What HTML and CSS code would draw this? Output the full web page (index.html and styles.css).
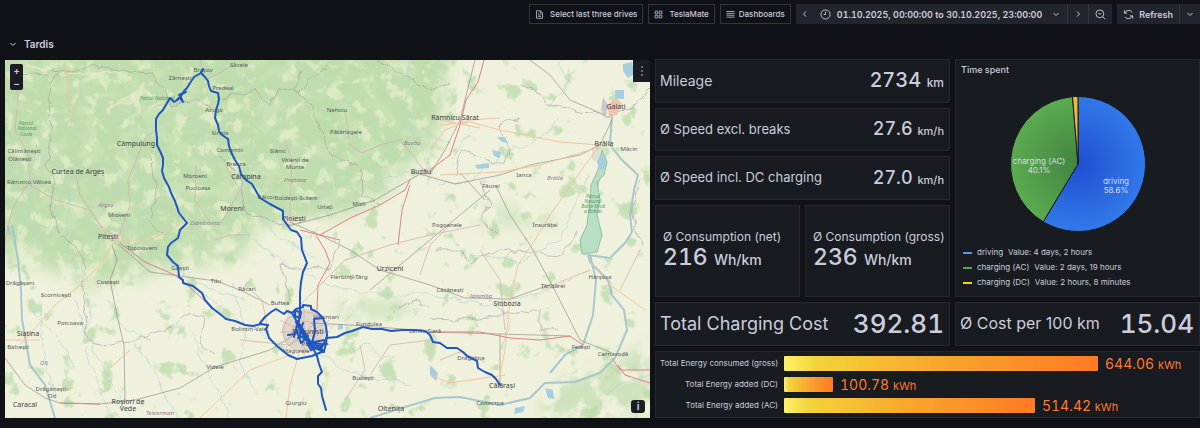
FILE: index.html
```html
<!DOCTYPE html>
<html lang="en">
<head>
<meta charset="utf-8">
<title>Tardis</title>
<link rel="stylesheet" href="styles.css">
</head>
<body>
<header class="toolbar">
  <button class="btn outline" type="button">
    <svg class="ico" viewBox="0 0 24 24"><path d="M14 2H4v20h16V8zM14 2v6h6M8 13h8M8 17h8M8 9h2"/></svg>
    <span class="wide">Select last three drives</span>
  </button>
  <button class="btn outline" type="button">
    <svg class="ico" viewBox="0 0 24 24"><path d="M3 3h7v7H3zM14 3h7v7h-7zM3 14h7v7H3zM14 14h7v7h-7z"/></svg>
    <span class="wide">TeslaMate</span>
  </button>
  <button class="btn outline" type="button">
    <svg class="ico" viewBox="0 0 24 24"><path d="M1 4h22M1 9h22M1 14h22M1 19h22"/></svg>
    <span>Dashboards</span>
  </button>
  <div class="group">
    <button class="btn seg" type="button" aria-label="Move time range backwards"><svg class="chev" viewBox="0 0 8 8"><path d="M5 1.500 2.500 4 5 6.500"/></svg></button>
    <button class="btn seg range" type="button">
      <svg class="ico big" viewBox="0 0 24 24"><circle cx="12" cy="12" r="10"/><path d="M12 6v6H8"/></svg>
      <span>01.10.2025, 00:00:00 to 30.10.2025, 23:00:00</span>
      <svg class="chev" viewBox="0 0 8 8"><path d="M1.500 3 4 5.500 6.500 3"/></svg>
    </button>
    <button class="btn seg split" type="button" aria-label="Move time range forwards"><svg class="chev" viewBox="0 0 8 8"><path d="M3 1.500 5.500 4 3 6.500"/></svg></button>
    <button class="btn seg split" type="button" aria-label="Zoom out time range"><svg class="ico big" viewBox="0 0 24 24"><circle cx="10.500" cy="10.500" r="8.500"/><path d="M17 17l5.500 5.500M7 10.500h7"/></svg></button>
  </div>
  <div class="group">
    <button class="btn seg refresh" type="button">
      <svg class="ico big" viewBox="0 0 24 24"><path d="M3 3v6h6M4 9a9 9 0 0 1 16-2M21 21v-6h-6M20 15a9 9 0 0 1-16 2"/></svg>
      <span>Refresh</span>
    </button>
    <button class="btn seg split" type="button" aria-label="Auto refresh interval"><svg class="chev" viewBox="0 0 8 8"><path d="M1.500 3 4 5.500 6.500 3"/></svg></button>
  </div>
</header>

<button class="row-title" type="button">
  <svg class="chev" viewBox="0 0 8 8"><path d="M1.500 3 4 5.500 6.500 3"/></svg>
  <span>Tardis</span>
</button>

<main class="board">
  <section class="map" aria-label="Drive map">
    <svg class="map-art" viewBox="5 60 645 358" preserveAspectRatio="xMidYMid slice">
      <defs>
        <filter id="woods" x="-10%" y="-10%" width="120%" height="120%" color-interpolation-filters="sRGB">
          <feGaussianBlur in="SourceGraphic" stdDeviation="7" result="area"/>
          <feTurbulence type="fractalNoise" baseFrequency=".05" numOctaves="5" seed="8"/>
          <feColorMatrix values="0 0 0 0 .72  0 0 0 0 .85  0 0 0 0 .66  5 0 0 0 -1.6"/>
          <feComposite in2="area" operator="in"/>
        </filter>
        <filter id="meadow" x="-10%" y="-10%" width="120%" height="120%" color-interpolation-filters="sRGB">
          <feGaussianBlur in="SourceGraphic" stdDeviation="5" result="area"/>
          <feTurbulence type="fractalNoise" baseFrequency=".07" numOctaves="4" seed="21"/>
          <feColorMatrix values="0 0 0 0 .91  0 0 0 0 .94  0 0 0 0 .80  0 7 0 0 -3.9"/>
          <feComposite in2="area" operator="in"/>
        </filter>
        <filter id="groves" x="0" y="0" width="100%" height="100%" color-interpolation-filters="sRGB">
          <feTurbulence type="fractalNoise" baseFrequency=".05" numOctaves="4" seed="4"/>
          <feColorMatrix values="0 0 0 0 .78  0 0 0 0 .88  0 0 0 0 .71  9 0 0 0 -5.7"/>
          <feComposite in2="SourceGraphic" operator="in"/>
        </filter>
        <filter id="rough" x="-5%" y="-5%" width="110%" height="110%">
          <feTurbulence type="fractalNoise" baseFrequency=".08" numOctaves="2" seed="3"/>
          <feDisplacementMap in="SourceGraphic" scale="9" xChannelSelector="R" yChannelSelector="G"/>
        </filter>
        <filter id="soft" x="-10%" y="-10%" width="120%" height="120%"><feGaussianBlur stdDeviation="9"/></filter>
      </defs>
      <rect x="5" y="60" width="645" height="358" fill="#f0f1dc"/>
      <rect x="5" y="60" width="645" height="358" filter="url(#groves)"/>
      <path d="M-20 30H450L442 95 434 142 405 165 385 190 350 206 300 214 262 222 240 245 215 235 190 262 150 262 120 275 85 272 45 255-20 245z" fill="#c8e1b5" filter="url(#soft)"/>
      <path d="M-10 40H450L444 95 432 145 405 165 385 195 350 215 300 225 262 225 240 262 190 270 150 275 120 290 85 288 45 270-10 255z" filter="url(#woods)" opacity=".6"/>
      <path d="M5 60H444L435 150 380 205 300 232 235 255 100 290 5 270z" filter="url(#meadow)" opacity=".7"/>
      <path d="M570 375 610 365 650 340V418H540L545 395z" filter="url(#woods)" opacity=".6"/>
      <path d="M475 205h20l60 8v12h-80zM340 300h70v18h-75z" filter="url(#woods)" opacity=".5"/>

      <g class="peaks" filter="url(#rough)">
        <path d="M108 112 120 102 138 90 143 84 140 97 130 103 118 105zM60 75l20-4 15 5 20-5M150 110l12-8M25 66l25 4"/>
      </g>
      <g class="bounds" filter="url(#rough)">
        <path d="M20 75 60 72 90 66 120 70 150 73 165 90 170 105 195 100 210 105M57 74 48 95 52 130 47 165 55 180 50 210 60 235 75 245 85 265 82 290 88 340 105 345 135 340 175 325 190 312 205 320 200 345 215 355"/>
        <path d="M222 100 255 90 270 107 280 88 300 93 310 80 325 70 330 62M300 93 313 110 323 130 330 155 345 160 362 168 363 195 380 205M376 60 400 72 430 90 450 84M152 155 155 195 150 220 165 235M220 155 240 180 245 215 290 225M520 85 540 92 550 105 580 112 608 115 635 105 650 88M520 118 500 125 510 150 505 165 460 150 455 175M480 180 490 205 480 220 500 235M435 250 460 250 470 263 500 250 530 252 560 255 580 230M430 318 470 320 500 315 540 310 540 330 560 330M340 240 330 270 280 265 290 300M395 310 415 300 430 308M640 180 632 210 640 245M295 90 300 72"/>
      </g>

      <g class="river thin" filter="url(#rough)">
        <path d="M60 170 70 200 65 240 80 270 90 310 85 350 100 390 112 418M120 170 115 200 128 230M140 180 145 200 140 240M35 240 30 180 50 150M75 300 85 330 110 380 130 418M130 340 155 370 165 400 180 418M190 330 205 365 220 395 230 418M185 280 225 310 270 340 305 350 360 375 410 385M120 245 150 250 200 285 245 300M225 205 245 235 280 260 330 285 380 295 430 295 490 305 545 290 590 270M255 150 250 200 275 235 320 260M360 190 380 180 420 170 440 185 470 180 510 150 530 145 560 120M455 110 470 130 450 160M560 60 568 85 545 110M410 60 405 95 415 140 405 165M350 350 370 345 380 360 395 355M30 310 60 340 75 370M40 300 45 360 55 400M110 300 120 325 150 340M600 400 620 385 650 375M590 175 570 215 560 240M480 290 510 320 500 350"/>
        <path d="M10 140 15 180 30 210 20 235M200 120 205 150 200 180M285 95 275 130 285 160M325 160 320 200 330 220M420 130 450 145M470 255 520 262 560 240M230 285 245 320 240 360 255 390"/>
      </g>
      <g class="river">
        <path d="M12 225 18 260 21 290 22 320 30 365 45 385 55 418M10 235 8 225"/>
        <path d="M370 418 405 407 435 398 460 397 500 405 530 398 545 383 575 382 600 373 615 358 627 330 624 310 612 295 608 280 590 262 588 255"/>
        <path d="M602 155 600 175 594 200 590 225 595 240M590 255 596 280 593 315 583 345 565 355 550 373M588 255 610 258 625 243 632 232 630 215 634 190 638 175 622 160 610 145 612 115"/>
      </g>
      <g fill="#b9dfc2" stroke="#8fbfa9">
        <path d="M602 150 607 162 604 175 597 182 600 200 597 215 602 235 597 252 582 254 580 240 587 225 590 200 591 185 598 170z"/>
      </g>
      <g fill="#a5cfe0">
        <path d="M600 153l6 7-2 9-5 1-2-8zM615 90h9v9h-9zM623 64l9-2 3 12-7 4-5-7zM497 137l8 0 3 6-6-1zM492 150l9 2-2 6-5-2zM475 165l14-2 0 5-12 1zM545 388l8 2 1 9-6-1zM515 408l10-2-2 6-9 2zM430 365l8 8-2 8-6-6zM338 325l5-1 0 5-5 1z"/>
      </g>
      <path d="M603 97 608 105 606 117 601 110z" fill="#c9c6cf"/>
      <path d="M607 105 616 98 622 103 617 115 609 116z" fill="#eec4ae"/>
      <ellipse cx="304" cy="330" rx="22" ry="21" fill="#dcd8ce"/>
      <path d="M592 148l8 3-4 12-4-4zM282 214l12 3-2 7-8-1zM110 230l9 3 4 8-9-2zM420 168l10 1 2 6-9 1z" fill="#e5ddd0"/>

      <g class="rail">
        <path d="M5 358 25 385 45 398 60 403 100 404 135 400 180 388 215 367 270 350 305 328M112 245 117 260 110 280 118 320 124 345 125 400M288 226 330 215 375 200 420 174 455 184 500 175 530 165 580 155 600 145 612 120M430 174 445 150 460 120 475 60M485 200 460 173M497 188 510 215 530 245 552 285 580 340 612 353M430 332 500 334 570 336M500 334 500 385M310 323 350 325 430 331M290 222 320 235 350 250 380 270 430 285 465 298 510 299 552 284M270 305 240 290 216 281 150 272 118 244M530 60 550 75 570 100 605 115M490 190 430 240 400 265 370 290"/>
      </g>
      <g class="road orange">
        <path d="M20 345 38 325 55 305 80 285 100 265 115 240 150 240 185 222M300 350 290 385 286 418M498 385 505 350 510 300 518 265 535 240 550 215 585 165 600 145M552 285 590 270M590 262 610 285 645 310M505 375 450 383 430 375M590 150 540 165 500 172 440 175M440 125 470 122 500 130 560 142 600 145M65 65 68 85 72 125M5 340 40 340M108 370 130 350M440 120 480 128M200 418 250 370 290 355M430 150 445 130 470 120 500 118"/>
      </g>
      <g class="road red">
        <path d="M320 235 350 218 380 205 405 190 410 180M430 170 450 155 460 125 466 100 478 82 484 60M120 243 145 262 175 275 187 285 215 310M430 332 480 332 510 338 540 340 570 336 583 345M316 235 325 250 330 263 318 285 317 310M618 365 625 375 650 383M60 403 100 404M398 245 402 210 410 185M612 358 620 370 650 370M340 240 300 230"/>
      </g>
      <g class="road rose">
        <path d="M15 65 18 100 15 130 28 155 30 180 12 210 5 240M30 185 55 200 90 210 110 240M76 175 80 195 100 225 118 238 130 205 128 180 145 138 155 130M200 60 205 80 222 72 235 62M345 110 350 145 362 153 380 145 400 140 415 158 425 172M285 140 292 160 290 200 290 220M196 165 195 200 210 222M225 165 240 190 220 225M270 340 262 300 245 285M360 345 365 370 345 400M40 180 20 190M250 235 230 235 215 240M480 250 500 280 505 330M300 305 320 285 345 260 390 245 430 235 480 225M440 360 460 352 485 362M370 375 390 345 430 340M640 250 620 290M240 340 290 345 330 320M450 225 430 245 420 275"/>
      </g>
      <g fill="none" stroke="#d9a9a4" stroke-width=".8">
        <ellipse cx="305" cy="332" rx="22" ry="20"/><ellipse cx="304" cy="332" rx="12" ry="11"/>
        <path d="M280 320 330 345M286 348 325 315M304 308V355M280 332H330"/>
      </g>

      <g class="places">
        <text x="239" y="67">Săcele</text><text x="180" y="80">Zărnești</text><text x="136" y="146" class="town">Câmpulung</text>
        <text x="78" y="174" class="town">Curtea de Argeș</text><text x="29" y="184">Râmnicu Vâlcea</text><text x="24" y="153">Călimănești</text>
        <text x="20" y="161">Olănești</text><text x="119" y="217">Mioveni</text><text x="108" y="239" class="town">Pitești</text><text x="142" y="250">Topoloveni</text>
        <text x="108" y="284">Costești</text><text x="56" y="297">Scornicești</text><text x="70" y="325">Potcoava</text><text x="28" y="336" class="town">Slatina</text>
        <text x="20" y="285">Drăgășani</text><text x="18" y="349">Balcești</text><text x="52" y="391">Drăgănești-</text><text x="52" y="398">Olt</text>
        <text x="25" y="407" class="town">Caracal</text><text x="128" y="404" class="town">Roșiori de</text><text x="128" y="411" class="town">Vede</text>
        <text x="195" y="178">Moroeni</text><text x="198" y="190">Pucioasa</text><text x="205" y="225" class="county">Dâmbovița</text><text x="232" y="211" class="town">Moreni</text>
        <text x="230" y="152">Comarnic</text><text x="236" y="166">Breaza</text><text x="246" y="179" class="town">Câmpina</text><text x="266" y="199">Băicoi</text>
        <text x="296" y="200">Boldești-Scăeni</text><text x="294" y="221" class="town">Ploiești</text><text x="278" y="153">Slănic</text><text x="295" y="162">Vălenii de</text><text x="295" y="169">Munte</text>
        <text x="337" y="112">Nehoiu</text><text x="346" y="134">Pătârlagele</text><text x="325" y="209">Urlați</text><text x="359" y="206">Mizil</text><text x="421" y="174" class="town">Buzău</text>
        <text x="455" y="120" class="town">Râmnicu Sărat</text><text x="616" y="109" class="town">Galați</text><text x="604" y="146" class="town">Brăila</text><text x="629" y="151">Măcin</text>
        <text x="524" y="177">Ianca</text><text x="491" y="188">Făurei</text><text x="447" y="227">Pogoanele</text><text x="545" y="227">Însurăței</text>
        <text x="390" y="271" class="town">Urziceni</text><text x="349" y="279">Fierbinți-Târg</text><text x="450" y="292">Căzănești</text><text x="507" y="306" class="town">Slobozia</text>
        <text x="553" y="288">Țăndărei</text><text x="600" y="279">Hârșova</text><text x="581" y="349">Fetești</text><text x="613" y="356">Cernavodă</text>
        <text x="502" y="388" class="town">Călărași</text><text x="490" y="405">Силистра</text><text x="391" y="411" class="town">Oltenița</text><text x="363" y="380">Budești</text>
        <text x="296" y="405">Giurgiu</text><text x="249" y="331">Bolintin-Vale</text><text x="247" y="291">Răcari</text><text x="280" y="305">Buftea</text><text x="180" y="270">Găești</text>
        <text x="216" y="283">Titu</text><text x="215" y="369">Videle</text><text x="369" y="326">Fundulea</text><text x="425" y="333">Lehliu Gară</text><text x="296" y="353">Măgurele</text>
        <text x="326" y="319">Voluntari</text><text x="308" y="334" class="town">București</text><text x="203" y="72">Brașov</text><text x="220" y="135">Sinaia</text>
        <text x="214" y="112">Azuga</text><text x="223" y="90">Predeal</text><text x="312" y="346">Popești</text><text x="471" y="360">Dragalina</text>
        <text x="106" y="207" class="county">Argeș</text><text x="295" y="182" class="county">Prahova</text><text x="412" y="145" class="county">Buzău</text><text x="555" y="180" class="county">Brăila</text>
        <text x="481" y="298" class="county">Ialomița</text><text x="44" y="365" class="county">Olt</text><text x="160" y="415" class="county">Teleorman</text>
        <text x="157" y="100" class="park">Parcul Național</text><text x="26" y="125" class="park">Parcul</text><text x="27" y="130" class="park">Național</text><text x="26" y="136" class="park">Cozia</text>
        <text x="593" y="198" class="park">Parcul</text><text x="593" y="203" class="park">Natural</text><text x="593" y="208" class="park">Balta Mică</text><text x="593" y="213" class="park">a Brăilei</text>
      </g>

      <g class="track">
        <path d="M203 69 201 73 194 77 190 83 187 88 184 91 181 96 177 100 174 102 170 98 167 103 163 110 159 114 156 119 156 130 157 138 157 145 160 151 163 158 163 165 162 171 164 178 169 187 171 193 175 201 177 207 179 213 187 223 180 230 178 238 171 243 168 247 167 255 173 262 178 266 179 277 183 280 183 283 193 286 202 293 205 300 212 308 220 314 226 319 235 321 245 325 253 326 261 324 267 325"/>
        <path d="M177 100 181 97 183 102 180 98M179 95 186 92"/>
        <path d="M201 73 205 77 208 81 209 86 211 91 218 93 219 99 218 104 216 110 215 118 218 125 219 131 222 135 228 139 229 146 231 152 235 160 239 166 241 174 246 180 252 184 256 191 260 198 270 204 283 211 283 219 291 230 297 232 301 238 302 250 307 263 303 272 301 282 300 293 300 309 299 321"/>
        <path d="M260 323 265 317 271 312 276 309 284 314 287 311 292 313 296 309 303 307 303 305 311 306 311 309 317 312 323 318 326 326 327 335 326 344 324 351 312 356 297 359 288 355 277 346 269 338 266 329 268 325"/>
        <path d="M326 338 337 337 345 333 352 331 363 327 372 329 382 329 391 331 402 330 415 330 425 331 430 335 433 342 440 343 447 348 457 348 463 352 467 356 477 361 478 368 485 372 492 375 496 379 500 385"/>
        <path d="M313 348 317 356 319 364 322 372 318 376 318 384 321 388 322 396 324 403 326 410"/>
        <path d="M292 313 296 320 299 327 304 335 309 341 313 347 324 352 319 346 327 344M288 335 295 334 298 330M294 337 297 325 302 332 298 338 306 335 310 343 303 338M314 319 323 318M314 319 315 331 312 343 322 344 311 350 307 343 325 340M295 311 301 312 300 318 295 316zM303 323 300 332 308 336 301 343 296 329M311 342 321 349 325 341"/>
        <path class="core" d="M297 322 301 328 306 337 313 347"/>
      </g>
    </svg>
    <div class="zoomer">
      <button type="button" aria-label="Zoom in">+</button>
      <button type="button" aria-label="Zoom out">−</button>
    </div>
    <button class="map-menu" type="button" aria-label="Panel menu"><svg viewBox="0 0 4 12"><path d="M1 2h2M1 6h2M1 10h2"/></svg></button>
    <button class="map-info" type="button" aria-label="Attributions">i</button>
  </section>

  <section class="card stat mid r1"><h2>Mileage</h2><p class="val v20">2734 <small>km</small></p></section>
  <section class="card stat mid r2"><h2 class="t13">Ø Speed excl. breaks</h2><p class="val v18">27.6 <small>km/h</small></p></section>
  <section class="card stat mid r3"><h2 class="t13">Ø Speed incl. DC charging</h2><p class="val v18">27.0 <small>km/h</small></p></section>
  <section class="card stack left r4"><h2 class="t12">Ø Consumption (net)</h2><p class="val v23">216 <small>Wh/km</small></p></section>
  <section class="card stack right r4"><h2 class="t12">Ø Consumption (gross)</h2><p class="val v23">236 <small>Wh/km</small></p></section>
  <section class="card stat mid r5"><h2 class="t18">Total Charging Cost</h2><p class="val v26">392.81</p></section>
  <section class="card stat end r5"><h2 class="t16">Ø Cost per 100 km</h2><p class="val v26">15.04</p></section>

  <section class="card pie">
    <h2 class="t9">Time spent</h2>
    <svg class="pie-art" viewBox="0 0 136 136">
      <defs>
        <radialGradient id="blue" gradientUnits="userSpaceOnUse" cx="68" cy="68" r="68"><stop offset="0" stop-color="#1f4fd2"/><stop offset="1" stop-color="#3279ea"/></radialGradient>
        <radialGradient id="green" gradientUnits="userSpaceOnUse" cx="68" cy="68" r="68"><stop offset="0" stop-color="#428440"/><stop offset="1" stop-color="#5bab50"/></radialGradient>
      </defs>
      <g stroke="#181b1f">
        <path fill="url(#blue)" d="M68 68V.5A67.500 67.500 0 1 1 33.200 125.800z"/>
        <path fill="url(#green)" d="M68 68 33.200 125.800A67.500 67.500 0 0 1 62.500 .7z"/>
        <path fill="#eab839" d="M68 68 62.500 .7A67.500 67.500 0 0 1 68 .5z"/>
      </g>
      <g class="pie-text">
        <text x="29" y="68">charging (AC)</text><text x="29" y="77">40.1%</text>
        <text x="106" y="88">driving</text><text x="106" y="97">58.6%</text>
      </g>
    </svg>
    <ul class="legend">
      <li><i class="key blue"></i><span>driving</span><span>Value: 4 days, 2 hours</span></li>
      <li><i class="key green"></i><span>charging (AC)</span><span>Value: 2 days, 19 hours</span></li>
      <li><i class="key yellow"></i><span>charging (DC)</span><span>Value: 2 hours, 8 minutes</span></li>
    </ul>
  </section>

  <section class="card energy">
    <span class="name">Total Energy consumed (gross)</span>
    <div class="lane"><div class="bar" style="width:100%"></div><p>644.06 <small>kWh</small></p></div>
    <span class="name">Total Energy added (DC)</span>
    <div class="lane"><div class="bar" style="width:15.6%"></div><p>100.78 <small>kWh</small></p></div>
    <span class="name">Total Energy added (AC)</span>
    <div class="lane"><div class="bar" style="width:79.9%"></div><p>514.42 <small>kWh</small></p></div>
  </section>
</main>
</body>
</html>
```
FILE: styles.css
```css
* { box-sizing: border-box; }
body {
  margin: 0;
  min-height: 100vh;
  background: #111217;
  color: #ccccdc;
  font-family: Inter, "Liberation Sans", sans-serif;
  overflow-x: hidden;
}
h2, p, ul { margin: 0; padding: 0; font-weight: 400; }
button { font: inherit; color: inherit; background: none; border: 0; padding: 0; }
svg { display: block; flex: none; }

.toolbar { display: flex; justify-content: flex-end; gap: 5px; padding: 4px 0 0; }
.btn {
  display: flex;
  align-items: center;
  gap: 4px;
  height: 20px;
  padding: 0 5px;
  white-space: nowrap;
  font-size: 8px;
  font-weight: 500;
}
.btn .wide { padding-left: 2px; }
.outline { border: 1px solid #34363d; }
.group { display: flex; background: #22252b; }
.range { gap: 6px; padding: 0 7px 0 6px; font-size: 9px; font-weight: 600; font-variant-numeric: tabular-nums; }
.range .chev { margin-left: 4px; }
.refresh { gap: 5px; padding: 0 6px; font-size: 9px; font-weight: 600; }
.split { border-left: 1px solid #34363d; padding: 0 6px; }
.ico, .chev { fill: none; stroke: currentColor; stroke-width: 2; }
.ico { width: 9px; height: 9px; }
.big { width: 11px; height: 11px; }
.chev { width: 8px; height: 8px; stroke-width: 1; }

.row-title {
  display: flex;
  align-items: center;
  gap: 7px;
  height: 35px;
  padding: 5px 0 0 9px;
  font-size: 10px;
  font-weight: 600;
}

.board {
  display: grid;
  grid-template-columns: repeat(24, minmax(0, 1fr));
  grid-template-rows: 44px 43px 44px 92px 44px 67px;
  gap: 5px;
  padding-left: 5px;
}
.card { background: #181b1f; border: 1px solid #25282d; min-width: 0; }
.mid { grid-column: 14 / span 6; }
.left { grid-column: 14 / span 3; }
.right { grid-column: 17 / span 3; }
.end { grid-column: 20 / span 5; }
.r1 { grid-row: 1; }
.r2 { grid-row: 2; }
.r3 { grid-row: 3; }
.r4 { grid-row: 4; }
.r5 { grid-row: 5; }

.stat { display: flex; align-items: center; justify-content: space-between; padding: 0 5px 2px 4px; white-space: nowrap; }
.stack { display: flex; flex-direction: column; justify-content: center; padding: 0 0 2px 7px; white-space: nowrap; }
h2 { font-size: 14px; }
.t9 { font-size: 9px; font-weight: 500; }
.t12 { font-size: 12px; line-height: 16px; }
.t13 { font-size: 13px; }
.t16 { font-size: 16px; }
.t18 { font-size: 18px; }
.val { font-weight: 500; font-variant-numeric: tabular-nums; }
.val small { font-size: 12px; }
.v18 { font-size: 18px; }
.v18 small { font-size: 11px; }
.v20 { font-size: 20px; }
.v23 { font-size: 23px; line-height: 24px; }
.v23 small { font-size: 14px; }
.v26 { font-size: 26px; }

.pie { grid-column: 20 / span 5; grid-row: 1 / span 4; display: flex; flex-direction: column; padding: 4px 5px 5px; }
.pie-art { width: 136px; height: 136px; margin: 21px auto 0; }
.pie-text { fill: #d8dbe6; font-size: 8px; text-anchor: middle; }
.legend { list-style: none; margin: 13px 0 0 2px; font-size: 8px; line-height: 15px; }
.legend li { display: flex; align-items: center; gap: 5px; }
.key { width: 9px; height: 2px; }
.blue { background: #5794f2; }
.green { background: #56a64b; }
.yellow { background: #f2d02f; }

.energy {
  grid-column: 14 / span 11;
  grid-row: 6;
  display: grid;
  grid-template-columns: auto 1fr;
  align-content: center;
  gap: 6px;
  padding: 0 5px 0 4px;
}
.name { font-size: 8px; line-height: 15px; text-align: right; white-space: nowrap; }
.lane { display: flex; align-items: center; gap: 7px; padding-right: 96px; height: 15px; min-width: 0; }
.bar { flex: none; height: 15px; border-radius: 1px; background: linear-gradient(90deg, #fff26a, #f2d43a 10%, #f8a62c 50%, #ff7a24); }
.lane p { font-size: 14px; color: #ff7a2f; white-space: nowrap; font-variant-numeric: tabular-nums; }
.lane small { font-size: 11px; }

.map { position: relative; grid-column: 1 / span 13; grid-row: 1 / span 6; overflow: hidden; margin-top: 1px; }
.map-art { width: 100%; height: 100%; }
.bounds { fill: none; stroke: #a597a0; stroke-width: .8; opacity: .75; }
.peaks { fill: #eef0d8; stroke: #e8e6c6; stroke-width: 2; opacity: .8; }
.peaks path { fill-opacity: .4; }
.river { fill: none; stroke: #9fc3cc; stroke-width: 2; opacity: .9; }
.thin { stroke: #b4d6d4; stroke-width: 1; opacity: .7; }
.rail { fill: none; stroke: #85807a; stroke-width: .7; opacity: .85; }
.road { fill: none; stroke-width: 1; }
.orange { stroke: #f3c3a0; }
.red { stroke: #e07f88; }
.rose { stroke: #d4aeb0; stroke-width: .8; }
.places { font-family: "Noto Sans", sans-serif; font-size: 6px; fill: #55585a; text-anchor: middle; }
.town { font-size: 7px; fill: #3d4042; }
.county { fill: #9178a0; font-style: italic; }
.park { fill: #4f9a62; font-style: italic; font-size: 5px; }
.track { fill: none; stroke: #1f56c0; stroke-width: 2; stroke-linejoin: round; stroke-linecap: round; }
.core { stroke-width: 4; }

.zoomer { position: absolute; top: 4px; left: 5px; width: 13px; background: #1b1d22; border-radius: 2px; }
.zoomer button { display: block; width: 13px; height: 13px; line-height: 13px; font-size: 10px; font-weight: 600; }
.map-menu { position: absolute; top: 0; right: 0; width: 17px; height: 22px; background: #1b1d24; }
.map-menu svg { width: 4px; height: 12px; margin: 0 auto; stroke: #b8bac6; stroke-width: 1; }
.map-info { position: absolute; right: 5px; bottom: 5px; width: 14px; height: 13px; background: #1b1d22; border-radius: 3px; font-size: 10px; line-height: 13px; font-weight: 700; }
```
